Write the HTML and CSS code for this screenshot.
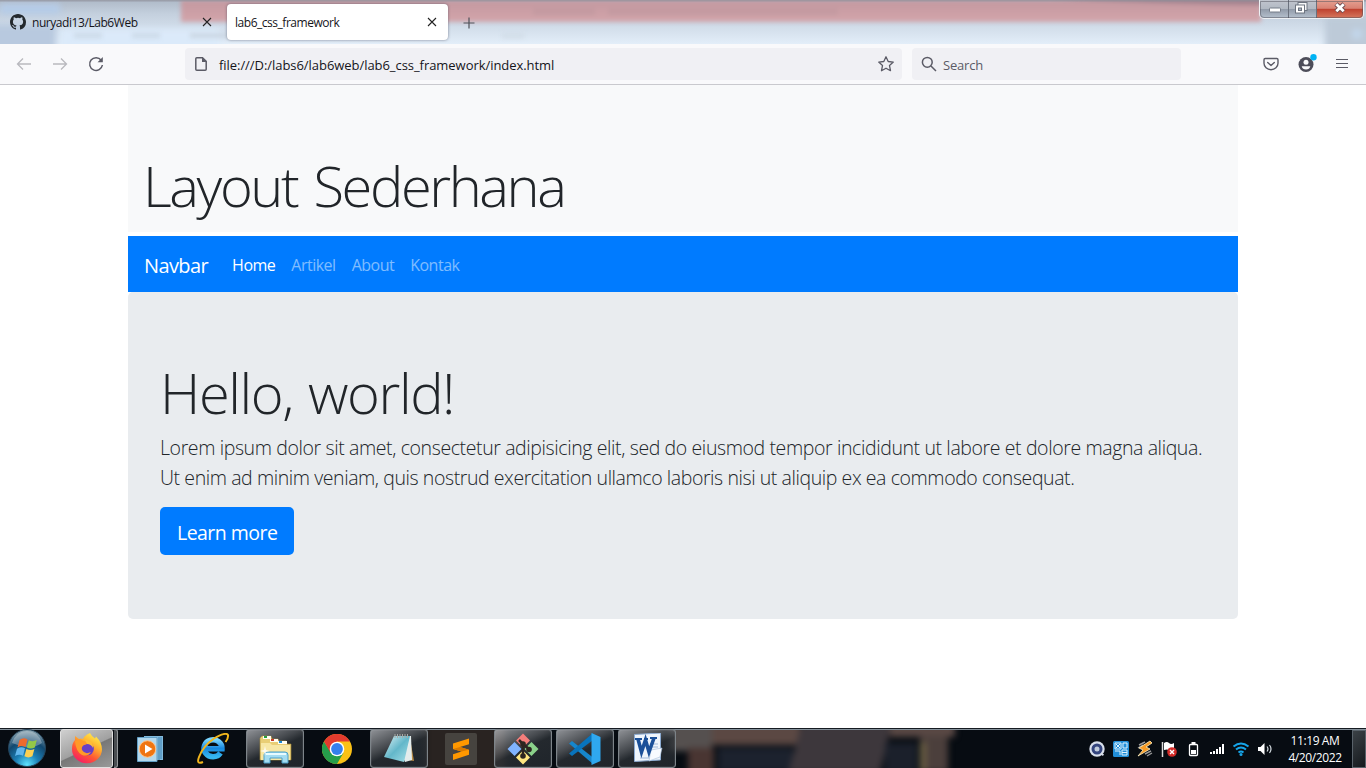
FILE: index.html
```html
<!DOCTYPE html>
<html lang="en">
<head>
<meta charset="utf-8">
<title>lab6_css_framework</title>
<link rel="stylesheet" href="styles.css">
</head>
<body>
<div class="titlebar">
  <svg class="glass" width="1366" height="44" viewBox="0 0 1366 44">
    <defs>
      <linearGradient id="sky" x1="0" y1="0" x2="0" y2="1"><stop offset="0" stop-color="#aeb9c7"/><stop offset=".3" stop-color="#c3cfdd"/><stop offset="1" stop-color="#e3eef9"/></linearGradient>
      <linearGradient id="rose" x1="0" y1="0" x2="0" y2="1"><stop offset="0" stop-color="#c398a0"/><stop offset="1" stop-color="#d3a5ab"/></linearGradient>
    </defs>
    <rect width="1366" height="44" fill="url(#sky)"/>
    <g class="haze">
      <rect x="-10" y="24" width="66" height="30" fill="#b8c9df"/>
      <rect x="60" y="29" width="160" height="24" fill="#dbeafa"/>
      <rect x="0" y="4" width="60" height="10" fill="#b5cce9"/>
      <rect x="1325" y="16" width="50" height="40" fill="#bdcad8"/>
      <circle cx="1357" cy="34" r="5" fill="#c3d8ee"/>
    </g>
    <g class="haze light">
      <rect x="181" y="0" width="1080" height="22" fill="url(#rose)"/>
      <rect x="533" y="8" width="62" height="7" fill="#c49aa1"/>
      <rect x="608" y="8" width="230" height="7" fill="#c49aa1"/>
      <rect x="74" y="33" width="28" height="5" fill="#ccdae8"/>
      <rect x="132" y="33" width="28" height="5" fill="#ccdae8"/>
      <rect x="190" y="33" width="38" height="5" fill="#cbd7e3"/>
      <rect x="502" y="33" width="22" height="5" fill="#d2dde8"/>
      <path d="M1050-2H1270V5Q1150 4 1050-2Z" fill="#816777" opacity=".5"/>
    </g>
    <rect width="1366" height="1.5" fill="#8b8991" opacity=".55"/>
  </svg>
  <div class="tab first">
    <svg width="16" height="16" viewBox="0 0 16 16"><path fill="#24292e" d="M8 0C3.58 0 0 3.58 0 8c0 3.54 2.29 6.53 5.47 7.59.4.07.55-.17.55-.38 0-.19-.01-.82-.01-1.49-2.01.37-2.53-.49-2.69-.94-.09-.23-.48-.94-.82-1.13-.28-.15-.68-.52-.01-.53.63-.01 1.08.58 1.23.82.72 1.21 1.87.87 2.33.66.07-.52.28-.87.51-1.07-1.78-.2-3.64-.89-3.64-3.95 0-.87.31-1.59.82-2.15-.08-.2-.36-1.02.08-2.12 0 0 .67-.21 2.2.82a7.6 7.6 0 0 1 4 0c1.53-1.04 2.2-.82 2.2-.82.44 1.1.16 1.92.08 2.12.51.56.82 1.27.82 2.15 0 3.07-1.87 3.75-3.65 3.95.29.25.54.73.54 1.48 0 1.07-.01 1.93-.01 2.2 0 .21.15.46.55.38A8.01 8.01 0 0 0 16 8c0-4.42-3.58-8-8-8z"/></svg>
    <span class="tab-name t-one">nuryadi13/Lab6Web</span>
    <svg class="close" width="10" height="10" viewBox="0 0 10 10"><path d="M1 1l8 8M9 1l-8 8" stroke="#222" stroke-width="1.1"/></svg>
  </div>
  <div class="tab active">
    <span class="tab-name t-two">lab6_css_framework</span>
    <svg class="close" width="10" height="10" viewBox="0 0 10 10"><path d="M1 1l8 8M9 1l-8 8" stroke="#222" stroke-width="1.1"/></svg>
  </div>
  <svg class="plus" width="12" height="12" viewBox="0 0 12 12"><path d="M6 .5v11M.5 6h11" stroke="#4e5058" stroke-width="1.2"/></svg>
  <div class="winctl">
    <span class="wc min"><svg width="28" height="17"><rect x="9.500" y="8" width="11" height="4" rx=".8" fill="#fff" stroke="#757c88"/></svg></span>
    <span class="wc max"><svg width="27" height="17"><rect x="9" y="2.500" width="9" height="8" fill="#f5f6f8" stroke="#6d7480"/><rect x="6.500" y="5" width="9" height="8" fill="#fff" stroke="#6d7480"/><rect x="9.500" y="8" width="3" height="2.500" fill="#a8b4c2" stroke="#6d7480"/></svg></span>
    <span class="wc cls"><svg width="47" height="17"><path d="M19 4l8 7.500M27 4l-8 7.500" stroke="#6f4a4e" stroke-width="4.600"/><path d="M19.300 4.300l7.400 7M26.700 4.300l-7.400 7" stroke="#fff" stroke-width="2.800"/></svg></span>
  </div>
</div>

<div class="toolbar">
  <div class="nav-icons">
    <svg width="16" height="16" viewBox="0 0 16 16" fill="none" stroke="#b9b9be" stroke-width="1.300"><path d="M15 8H2M7 2.500L1.500 8 7 13.500"/></svg>
    <svg width="16" height="16" viewBox="0 0 16 16" fill="none" stroke="#b9b9be" stroke-width="1.300"><path d="M1 8h13M9 2.500L14.500 8 9 13.500"/></svg>
    <svg width="16" height="16" viewBox="0 0 16 16" fill="none" stroke="#5b5b66" stroke-width="1.500"><path d="M13.200 4.200A6.400 6.400 0 1 0 14.400 9"/><path d="M14.800 1v5.200H9.600z" fill="#5b5b66" stroke="none"/></svg>
  </div>
  <div class="url">
    <svg width="14" height="16" viewBox="0 0 14 16"><path d="M2.800 1.700h5.700l3.700 3.700v7.800q0 1-1 1H2.800q-1 0-1-1V2.700q0-1 1-1z" fill="none" stroke="#5b5b66" stroke-width="1.500"/><path d="M8 1.500V6h4.500z" fill="#5b5b66"/></svg>
    <span class="url-text">file:///D:/labs6/lab6web/lab6_css_framework/index.html</span>
    <svg class="star" width="18" height="18" viewBox="0 0 18 18"><path d="M9 1.800l2.200 4.700 5.100.6-3.800 3.500 1 5.100L9 13.200l-4.500 2.500 1-5.100L1.700 7.100l5.100-.6z" fill="none" stroke="#5b5b66" stroke-width="1.300" stroke-linejoin="round"/></svg>
  </div>
  <div class="search">
    <svg width="16" height="16" viewBox="0 0 16 16" fill="none" stroke="#5b5b66" stroke-width="1.500"><circle cx="6.300" cy="6.300" r="4.900"/><path d="M10 10l5 5"/></svg>
    <span class="search-text">Search</span>
  </div>
  <div class="actions">
    <svg width="16" height="16" viewBox="0 0 16 16" fill="none" stroke="#5b5b66" stroke-width="1.400" stroke-linecap="round" stroke-linejoin="round"><path d="M2.200 2.500h11.600q1.200 0 1.200 1.200v3.500a7 6.500 0 0 1-14 0V3.700q0-1.200 1.200-1.200z"/><path d="M4.700 6.400L8 9.400l3.300-3"/></svg>
    <svg width="20" height="20" viewBox="0 0 20 20"><circle cx="9" cy="10.500" r="7.500" fill="#4d4d59"/><circle cx="9" cy="8.300" r="2.500" fill="#f9f9fb"/><path d="M4.700 12.200h8.600q-.8 3.200-4.300 3.200t-4.300-3.200z" fill="#f9f9fb"/><circle cx="16.500" cy="3.300" r="3.200" fill="#00b3f4"/></svg>
    <svg width="14" height="12" viewBox="0 0 14 12"><path d="M1 1.500h12M1 5.500h12M1 9.500h12" stroke="#5b5b66" stroke-width="1.200"/></svg>
  </div>
</div>

<main class="page">
  <div class="container">
    <header class="head"><h1 class="display"><span class="d-one">Layout Sederhana</span></h1></header>
    <nav class="navbar">
      <a class="brand">Navbar</a>
      <a class="link on">Home</a><a class="link">Artikel</a><a class="link">About</a><a class="link">Kontak</a>
    </nav>
    <section class="jumbotron">
      <h1 class="display"><span class="d-two">Hello, world!</span></h1>
      <p class="lead"><span class="l-one">Lorem ipsum dolor sit amet, consectetur adipisicing elit, sed do eiusmod tempor incididunt ut labore et dolore magna aliqua.</span><br><span class="l-two">Ut enim ad minim veniam, quis nostrud exercitation ullamco laboris nisi ut aliquip ex ea commodo consequat.</span></p>
      <a class="btn">Learn more</a>
    </section>
  </div>
</main>

<div class="taskbar">
  <svg class="glass" width="1366" height="40" viewBox="0 0 1366 40">
    <g class="haze">
      <rect x="425" y="-5" width="80" height="50" fill="#292321"/>
      <rect x="670" y="-5" width="42" height="28" fill="#55504f"/>
      <rect x="688" y="20" width="26" height="30" fill="#493532"/>
      <rect x="712" y="-5" width="88" height="22" fill="#5b4843"/>
      <rect x="718" y="20" width="75" height="24" fill="#1c222e"/>
      <path d="M802-5h90l-12 50h-92z" fill="#3d373c"/>
      <path d="M890-5h65v14h-65z" fill="#594844"/>
      <rect x="885" y="15" width="32" height="30" fill="#1b202b"/>
      <rect x="920" y="8" width="28" height="36" fill="#4b3f3c"/>
      <rect x="920" y="14" width="6" height="30" fill="#6d6144"/>
    </g>
    <rect width="1366" height="1" fill="#151b22"/><rect y="1" width="1366" height="1" fill="#84909a"/>
  </svg>

  <div class="start">
    <svg width="40" height="40" viewBox="0 0 40 40">
      <defs><radialGradient id="orb" cx=".5" cy=".95" r=".9"><stop offset="0" stop-color="#5ee4ff"/><stop offset=".35" stop-color="#1c7fb5"/><stop offset=".7" stop-color="#12486f"/><stop offset="1" stop-color="#7d9aa9"/></radialGradient></defs>
      <circle cx="20" cy="20" r="18.500" fill="url(#orb)" stroke="#26445a"/>
      <path d="M5 15Q9 3 20 3t15 12q-7 5-15 4T5 15z" fill="#fff" opacity=".3"/>
      <path d="M12.500 12q4-3 8-.500l-2 7.500q-4-2-8 .5z" fill="#ee6a2d"/>
      <path d="M21.800 12.200q4 2 8-.2l-2 7.500q-4 2.200-8 0z" fill="#93c847"/>
      <path d="M10 20.700q4-2.500 8-.5l-2 7.500q-4-2.200-8 .3z" fill="#62b6ec"/>
      <path d="M19.400 20.900q4 2.200 8 0l-2 7.400q-4 2.200-8 0z" fill="#fcd052"/>
    </svg>
  </div>
  <div class="slots">
    <div class="slot ff">
      <span class="ffbtn"><svg width="32" height="32" viewBox="0 0 32 32">
        <defs><linearGradient id="fx" x1=".8" y1="0" x2=".2" y2="1"><stop offset="0" stop-color="#fff44f"/><stop offset=".35" stop-color="#ffb02e"/><stop offset=".65" stop-color="#ff5634"/><stop offset="1" stop-color="#f5156c"/></linearGradient></defs>
        <path d="M19 0q2 4 5 5.500l1-2q6 6 6 13A15 14 0 0 1 1 16Q1 10 4 7V3l4 3q2-1 4 0l1-2q3-3 6-4z" fill="url(#fx)"/>
        <circle cx="16.500" cy="16" r="6.300" fill="#6840c7"/><path d="M4 8q5-3 8 0l5 1q-1 3-4 3-3 2-2 5 3 5 9 2-3 5-9 3Q5 19 4 8z" fill="#ff9a28"/>
        <path d="M14 7q8 0 8 8-2-4-6-4z" fill="#ffbe39"/>
      </svg></span><span class="ffedge"></span>
    </div>
    <div class="slot">
      <svg width="28" height="28" viewBox="0 0 28 28"><path d="M7 1h19v24H7z" fill="#83bbdd"/><path d="M24 2v22M22 2v23" stroke="#3f83b2"/><path d="M.5 2.500H20v24H.5z" fill="#b3d8ed" stroke="#629fc5"/><circle cx="10.500" cy="14" r="8.300" fill="#ef7512" stroke="#ffc48a"/><path d="M8 9.500l7.500 4.500L8 18.500z" fill="#fff"/></svg>
    </div>
    <div class="slot">
      <svg width="34" height="32" viewBox="0 0 34 32"><defs><linearGradient id="ie" x1="0" y1="0" x2="0" y2="1"><stop offset="0" stop-color="#79d5ff"/><stop offset=".5" stop-color="#1787dd"/><stop offset="1" stop-color="#36b7f1"/></linearGradient></defs><path d="M24.500 20A9 8.500 0 1 1 26 15.800H10" fill="none" stroke="url(#ie)" stroke-width="5.500"/><path d="M7 29Q0 32 3 24 7 13 18 5.500 30-1.500 32 2q.5 3-2.500 7" fill="none" stroke="#f1b51c" stroke-width="2"/></svg>
    </div>
    <div class="slot open">
      <svg width="34" height="32" viewBox="0 0 34 32"><path d="M2 5l2-2h9l1 3h6l1 2h7l1 3h4v16H2z" fill="#e9ce75" stroke="#a98d3c" stroke-width=".6"/><path d="M5 3h8v3H5zM12 6h8v3h-8zM20 8h9v3h-9z" fill="#fffdf2"/><path d="M6 3h3v2H6z" fill="#28a03c"/><path d="M13 6h3v2h-3z" fill="#c83b24"/><path d="M21 8h3v2h-3z" fill="#1c8bd4"/><path d="M3 10h9l2 2h18v15H3z" fill="#f7e7a5"/><path d="M6 30v-8q0-3 3-3h18q3 0 3 3v8h-6v-5H12v5z" fill="#a3dcf1" stroke="#4da0c8"/><path d="M8 21h20" stroke="#e7fbff" stroke-width="2"/><path d="M7 13l1 4 4 1-4 1-1 4-1-4-4-1 4-1z" fill="#fff" opacity=".8"/></svg>
    </div>
    <div class="slot">
      <svg width="30" height="30" viewBox="0 0 30 30"><circle cx="15" cy="15" r="15" fill="#fbc116"/><path d="M2 7.500A15 15 0 0 0 15 30l6.500-11.200L9 18z" fill="#269e4b"/><path d="M2 7.500A15 15 0 0 1 28 7.500H15L8.500 18.700z" fill="#e33b2e"/><circle cx="15" cy="15" r="7.300" fill="#fff"/><circle cx="15" cy="15" r="5.900" fill="#3480ed"/></svg>
    </div>
    <div class="slot open">
      <svg width="32" height="32" viewBox="0 0 32 32"><defs><linearGradient id="np" x1="0" y1="0" x2="1" y2="1"><stop offset="0" stop-color="#dff2f5"/><stop offset=".5" stop-color="#63b7ca"/><stop offset="1" stop-color="#a7e0e8"/></linearGradient></defs><path d="M27 5l4 23-6-1z" fill="#b98c45"/><path d="M11 3h17l1 24-7 2z" fill="#e4ecec"/><path d="M11 3h16l-6 26-20-5z" fill="url(#np)"/><path d="M12 1v4m2.500-4v4M17 1v4m2.500-4v4M22 1v4m2.500-4v4" stroke="#a7aaa7"/></svg>
    </div>
    <div class="slot">
      <span class="sublime"><svg width="32" height="32" viewBox="0 0 32 32"><path d="M8 10.500L24 5.500v5.800l-9 2.800 9 2.700v5L8 27v-5.700l8.500-2.800L8 16z" fill="#ff9800"/><path d="M8 16l8.500 2.500 7.500-1.700-9-2.700z" fill="#d97a00"/></svg></span>
    </div>
    <div class="slot open">
      <svg width="32" height="32" viewBox="0 0 32 32"><path d="M16 .5l7 7-7 7-7-7z" fill="#f47e7b"/><path d="M7.500 9l7 7-7 7-7-7z" fill="#80b3ff"/><path d="M24.500 9l7 7-7 7-7-7z" fill="#8bd28b"/><path d="M16 17.500l7 7-7 7-7-7z" fill="#ffe680"/><path d="M12 7l4 4v13M16 11l6 5" fill="none" stroke="#2c2520" stroke-width="2.500"/><circle cx="16" cy="11" r="2.800" fill="#2c2520"/><circle cx="22" cy="16.500" r="2.800" fill="#2c2520"/><circle cx="16" cy="23" r="2.800" fill="#2c2520"/></svg>
    </div>
    <div class="slot open">
      <svg width="34" height="34" viewBox="0 0 34 34"><path d="M1 11.500L4 9l21 16.500V32z" fill="#1686cc"/><path d="M1 21.500L4 24 25 8V1z" fill="#0874bd"/><path d="M23.500 1l9 4v24l-9 4z" fill="#2fa8ef"/></svg>
    </div>
    <div class="slot open">
      <svg width="32" height="32" viewBox="0 0 32 32"><path d="M3.500 1.500l26-1.500v27l-26 1.500z" fill="#eff5fc" stroke="#8cabd2"/><path d="M19 11h8M20 14h7M9 25h14" stroke="#a1b9d9"/><path d="M20 17l11-2-2 9-11 4z" fill="#f8fbff" stroke="#a8bfda" stroke-width=".6"/><path d="M7 6l3.500 13 4-12 3.500 12L23 5" fill="none" stroke="#1b5099" stroke-width="3.600"/><path d="M4 6h7M13 6h4M19 5h7" stroke="#1b5099" stroke-width="2.200"/></svg>
    </div>
  </div>

  <div class="tray">
    <svg viewBox="0 0 18 18"><circle cx="9" cy="9" r="7.700" fill="#d9e0ec"/><circle cx="9" cy="9" r="4" fill="#c0ccdc" stroke="#34457e" stroke-width="3"/><path d="M12 14h4l-1 2z" fill="#d9e0ec"/></svg>
    <svg viewBox="0 0 18 18"><rect x="1" y="1" width="16" height="16" rx="1.500" fill="#218ed8"/><path d="M3 3h6v6H3zM4 4l4 4m0-4L4 8M11 3h4v5h-4zM3 11h5v4M10 10h5v5h-5zM10 12.500h5" fill="none" stroke="#dff3ff"/></svg>
    <svg viewBox="0 0 18 18"><path d="M9 14l6-3M11 16l5-3M3 5l6-3M2 8l5-3" stroke="#999" stroke-width="1.400"/><path d="M14 1L3 8l4 2-5 6 12-7-4-2 6-4z" fill="#f89c26" stroke="#fff1c2" stroke-width=".8"/></svg>
    <svg viewBox="0 0 18 18"><path d="M2.500 2v15" stroke="#ddd" stroke-width="1.500"/><path d="M4 3q3-2 5 0t5 0v7q-3 1-5 0t-5 0z" fill="#fff"/><circle cx="12" cy="12" r="4.800" fill="#d32b28"/><path d="M10 10l4 4m0-4l-4 4" stroke="#fff" stroke-width="1.400"/></svg>
    <svg viewBox="0 0 18 18"><rect x="5.500" y="4.500" width="8" height="11" rx="1" fill="none" stroke="#fff" stroke-width="1.300"/><path d="M7.500 3h4" stroke="#fff" stroke-width="2"/><path d="M7 10h5v4H7z" fill="#fff"/></svg>
    <svg viewBox="0 0 18 18"><path d="M3 14v-2M6 14v-3M9 14V9M12 14V7M15 14V4" stroke="#fff" stroke-width="2"/></svg>
    <svg viewBox="0 0 18 18"><path d="M1.500 6.500q7.500-6 15 0M4 9.500q5-4 10 0M6.500 12.500q2.500-2 5 0" fill="none" stroke="#16a5e9" stroke-width="2"/><circle cx="9" cy="14.500" r="1.500" fill="#16a5e9"/></svg>
    <svg viewBox="0 0 18 18"><path d="M2 7h2.500L8.500 3v12l-4-4H2z" fill="#fff"/><path d="M11 6.500q2 2.500 0 5M13.500 5q3 4 0 8" fill="none" stroke="#d4dbe0" stroke-width="1.200"/></svg>
  </div>
  <div class="clock"><span class="time">11:19 AM</span><span class="date">4/20/2022</span></div>
  <div class="peek"></div>
</div>
</body>
</html>
```
FILE: styles.css
```css
*{box-sizing:border-box}
body{margin:0;width:1366px;height:768px;overflow:hidden;display:flex;flex-direction:column;background:#fff;font-family:"Open Sans","Noto Sans",sans-serif;color:#212529}
svg{display:block;flex:none}
span,a{white-space:nowrap}
.glass{position:absolute;left:0;top:0;z-index:-1}
.haze{filter:blur(3px)}
.haze.light{filter:blur(2px)}
.titlebar{position:relative;z-index:0;height:44px;display:flex;align-items:flex-start;flex:none;overflow:hidden}
.tab{display:flex;align-items:center;height:36px;margin-top:4px;width:221px;padding:0 11px 0 10px;font-size:12px;color:#15141a}
.tab.first{padding-right:9px}
.tab .close{margin-left:auto}
.tab-name{margin-left:6px;padding-top:1px}
.t-one{letter-spacing:-.44px}
.t-two{letter-spacing:-.47px;margin-left:-2px}
.tab.active{background:#fff;border-radius:4px;margin-left:6px;box-shadow:0 0 3px rgba(60,60,80,.6)}
.plus{margin:17px 0 0 15px}
.winctl{margin:0 2px 0 auto;display:flex;width:105px;height:19px;border:1px solid #eef1f4;border-top:0;border-radius:0 0 5px 5px;overflow:hidden;outline:1px solid rgba(80,80,90,.5);outline-offset:-2px}
.wc{height:18px;background:linear-gradient(#c1c5ce 0,#b2b9c3 48%,#929ba9 52%,#b6c1ce);border-right:1px solid #6b717d}
.cls{background:linear-gradient(#e5a293 0,#d98273 46%,#bf4330 52%,#d6785f);border:0;flex:1}
.toolbar{height:41px;flex:none;background:#f9f9fb;border-bottom:1px solid #c9c9ce;display:flex;align-items:center}
.nav-icons{display:flex;gap:20px;padding-left:16px;width:185px}
.url{width:717px;height:32px;background:#f0f0f4;border-radius:4px;display:flex;align-items:center;padding:0 7px 0 9px;font-size:13px;color:#15141a}
.url-text{margin-left:11px;padding-top:2px;letter-spacing:-.05px}
.star{margin-left:auto}
.search{width:269px;height:32px;margin-left:10px;background:#f0f0f4;border-radius:4px;display:flex;align-items:center;padding-left:9px;font-size:13px;color:#5b5b66}
.search-text{margin-left:6px;padding-top:2px;letter-spacing:-.2px}
.actions{margin-left:auto;display:flex;align-items:center;padding-right:17px;gap:18px}
.page{flex:1;min-height:0}
.container{width:1110px;margin:0 auto}
.head{height:147px;background:#f8f9fa;padding:67px 16px 0}
.display{margin:0;font-size:56px;line-height:67px;font-weight:300}
.d-one{letter-spacing:-2.4px;word-spacing:4px;margin-left:-1px}
.d-two{letter-spacing:-1.4px;word-spacing:2px}
.navbar{height:56px;margin-top:4px;background:#007bff;display:flex;align-items:center;padding:3px 16px 0;font-size:16px}
.brand{font-size:20px;color:#fff;margin-right:16px;letter-spacing:-.6px}
.link{padding:0 8px 2px;color:rgba(255,255,255,.5);letter-spacing:-.5px}
.on{color:#fff}
.jumbotron{height:327px;background:#e9ecef;border-radius:5px;padding:67px 32px 0}
.lead{margin:7px 0 14px;font-size:19.5px;line-height:30px;font-weight:300}
.l-one{letter-spacing:-.39px}
.l-two{letter-spacing:-.42px}
.btn{display:inline-block;width:134px;height:48px;padding:2px 17px 0;line-height:48px;border-radius:5px;background:#007bff;color:#fff;font-size:19.5px;letter-spacing:-.53px}
.taskbar{position:relative;z-index:0;height:40px;flex:none;display:flex;background:#070c12;overflow:hidden}
.start{width:60px;padding-left:7px}
.slots{display:flex;gap:4px;padding-top:1px}
.slot{width:58px;height:39px;display:flex;align-items:center;justify-content:center}
.open{border:1px solid #7d8489;border-radius:3px;background:linear-gradient(155deg,rgba(188,190,194,.75) 0,rgba(110,113,117,.6) 38%,rgba(48,53,58,.7) 52%,rgba(42,47,53,.7));box-shadow:inset 0 0 1px #b6babf}
.ff{justify-content:flex-start}
.ffbtn{width:53px;height:39px;display:flex;align-items:center;justify-content:center;border:1px solid #e0e0e0;border-radius:3px;background:linear-gradient(155deg,#d0d0d0,#a0a0a0 50%,#777 52%,#999)}
.ffedge{width:4px;height:39px;margin-left:1px;border:1px solid #93979a;border-left:0;border-radius:0 3px 3px 0;background:#4a4e52}
.sublime{border-radius:2px;background:#46433f}
.tray{display:flex;align-items:center;gap:6px;margin-left:auto;padding-top:2px}
.tray svg{width:18px;height:18px}
.clock{width:78px;display:flex;flex-direction:column;align-items:center;padding:4px 0 0 4px;font-size:12px;line-height:17px;color:#fff;letter-spacing:-.4px}
.peek{width:14px;margin-top:2px;border:1px solid #59626a;background:linear-gradient(135deg,#3b4146,#15191d)}
```
